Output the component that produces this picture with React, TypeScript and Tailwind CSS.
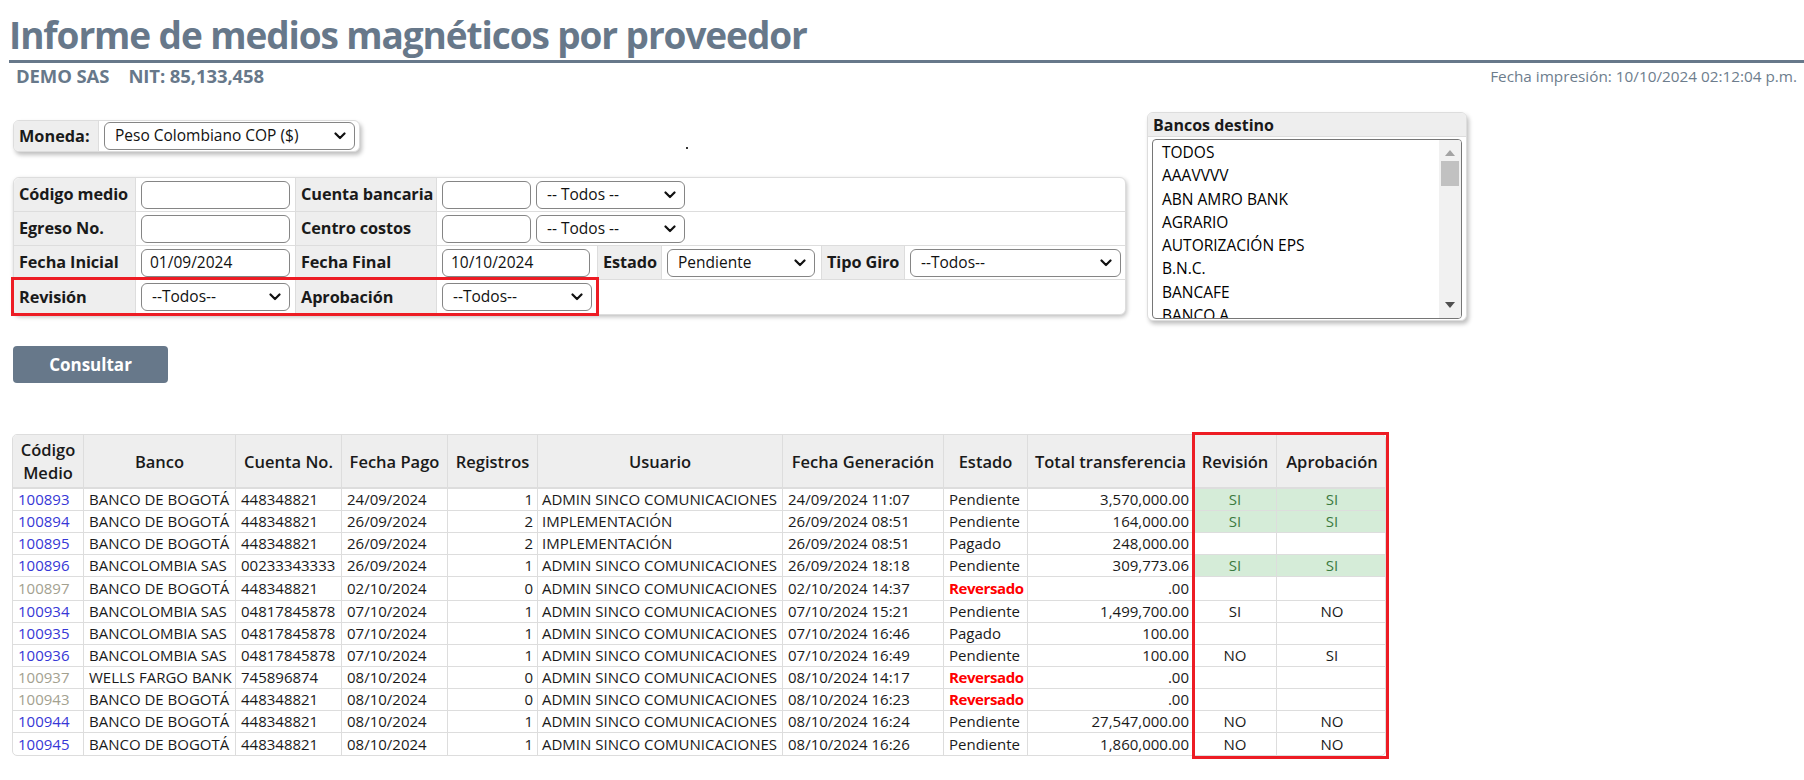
import React from "react";

const F = { fontFamily: '"Open Sans", "Noto Sans", Arial, sans-serif' };

function Chevron() {
  return (
    <svg width="12" height="8" viewBox="0 0 12 8" className="shrink-0">
      <path d="M1.5 1.5 L6 6 L10.5 1.5" fill="none" stroke="#111" strokeWidth="2.2" strokeLinecap="round" strokeLinejoin="round" />
    </svg>
  );
}

function Sel({ w, text }: { w: string; text: string }) {
  return (
    <div className={`${w} h-[28px] flex items-center justify-between border border-[#858585] rounded-[6px] bg-white pl-[10px] pr-[8px] text-[15.5px] text-[#111]`}>
      <span className="whitespace-nowrap">{text}</span>
      <Chevron />
    </div>
  );
}

function Inp({ w, text = "" }: { w: string; text?: string }) {
  return (
    <div className={`${w} h-[28px] flex items-center border border-[#858585] rounded-[6px] bg-white px-[8px] text-[15.5px] text-[#111]`}>
      {text}
    </div>
  );
}

function Label({ w, children }: { w: string; children: React.ReactNode }) {
  return (
    <div className={`${w} h-full bg-[#eeeeee] border-r border-[#dddddd] flex items-center pl-[5px] text-[16.3px] font-bold text-[#1a1a1a] whitespace-nowrap tracking-[-0.1px]`}>
      {children}
    </div>
  );
}

const banks = ["TODOS", "AAAVVVV", "ABN AMRO BANK", "AGRARIO", "AUTORIZACIÓN EPS", "B.N.C.", "BANCAFE", "BANCO A"];

type Row = {
  code: string;
  gray?: boolean;
  banco: string;
  cuenta: string;
  fecha: string;
  reg: string;
  usuario: string;
  gen: string;
  estado: string;
  total: string;
  rev: string;
  apr: string;
  green?: boolean;
  tall?: boolean;
};

const rows: Row[] = [
  { code: "100893", banco: "BANCO DE BOGOTÁ", cuenta: "448348821", fecha: "24/09/2024", reg: "1", usuario: "ADMIN SINCO COMUNICACIONES", gen: "24/09/2024 11:07", estado: "Pendiente", total: "3,570,000.00", rev: "SI", apr: "SI", green: true },
  { code: "100894", banco: "BANCO DE BOGOTÁ", cuenta: "448348821", fecha: "26/09/2024", reg: "2", usuario: "IMPLEMENTACIÓN", gen: "26/09/2024 08:51", estado: "Pendiente", total: "164,000.00", rev: "SI", apr: "SI", green: true },
  { code: "100895", banco: "BANCO DE BOGOTÁ", cuenta: "448348821", fecha: "26/09/2024", reg: "2", usuario: "IMPLEMENTACIÓN", gen: "26/09/2024 08:51", estado: "Pagado", total: "248,000.00", rev: "", apr: "" },
  { code: "100896", banco: "BANCOLOMBIA SAS", cuenta: "00233343333", fecha: "26/09/2024", reg: "1", usuario: "ADMIN SINCO COMUNICACIONES", gen: "26/09/2024 18:18", estado: "Pendiente", total: "309,773.06", rev: "SI", apr: "SI", green: true },
  { code: "100897", gray: true, banco: "BANCO DE BOGOTÁ", cuenta: "448348821", fecha: "02/10/2024", reg: "0", usuario: "ADMIN SINCO COMUNICACIONES", gen: "02/10/2024 14:37", estado: "Reversado", total: ".00", rev: "", apr: "", tall: true },
  { code: "100934", banco: "BANCOLOMBIA SAS", cuenta: "04817845878", fecha: "07/10/2024", reg: "1", usuario: "ADMIN SINCO COMUNICACIONES", gen: "07/10/2024 15:21", estado: "Pendiente", total: "1,499,700.00", rev: "SI", apr: "NO" },
  { code: "100935", banco: "BANCOLOMBIA SAS", cuenta: "04817845878", fecha: "07/10/2024", reg: "1", usuario: "ADMIN SINCO COMUNICACIONES", gen: "07/10/2024 16:46", estado: "Pagado", total: "100.00", rev: "", apr: "" },
  { code: "100936", banco: "BANCOLOMBIA SAS", cuenta: "04817845878", fecha: "07/10/2024", reg: "1", usuario: "ADMIN SINCO COMUNICACIONES", gen: "07/10/2024 16:49", estado: "Pendiente", total: "100.00", rev: "NO", apr: "SI" },
  { code: "100937", gray: true, banco: "WELLS FARGO BANK", cuenta: "745896874", fecha: "08/10/2024", reg: "0", usuario: "ADMIN SINCO COMUNICACIONES", gen: "08/10/2024 14:17", estado: "Reversado", total: ".00", rev: "", apr: "" },
  { code: "100943", gray: true, banco: "BANCO DE BOGOTÁ", cuenta: "448348821", fecha: "08/10/2024", reg: "0", usuario: "ADMIN SINCO COMUNICACIONES", gen: "08/10/2024 16:23", estado: "Reversado", total: ".00", rev: "", apr: "" },
  { code: "100944", banco: "BANCO DE BOGOTÁ", cuenta: "448348821", fecha: "08/10/2024", reg: "1", usuario: "ADMIN SINCO COMUNICACIONES", gen: "08/10/2024 16:24", estado: "Pendiente", total: "27,547,000.00", rev: "NO", apr: "NO" },
  { code: "100945", banco: "BANCO DE BOGOTÁ", cuenta: "448348821", fecha: "08/10/2024", reg: "1", usuario: "ADMIN SINCO COMUNICACIONES", gen: "08/10/2024 16:26", estado: "Pendiente", total: "1,860,000.00", rev: "NO", apr: "NO" },
];

const headers = ["Código Medio", "Banco", "Cuenta No.", "Fecha Pago", "Registros", "Usuario", "Fecha Generación", "Estado", "Total transferencia", "Revisión", "Aprobación"];

const gridCols = "grid grid-cols-[71px_152px_106px_106px_90px_245px_161px_84px_166px_83px_110px]";

export default function App() {
  return (
    <div className="relative w-[1804px] h-[780px] bg-white overflow-hidden text-[#1a1a1a]" style={F}>
      {/* Title */}
      <h1 className="pl-[9px] pt-[12px] text-[37px] font-bold leading-[46px] tracking-[-1.1px] text-[#67788a] whitespace-nowrap">
        Informe de medios magnéticos por proveedor
      </h1>
      <div className="ml-[9px] mt-[2px] h-[3px] bg-[#67788a]" />
      <div className="flex justify-between items-start pl-[16px] pr-[7px] mt-[1px] h-[24px]">
        <div className="flex gap-[19px] text-[18.5px] font-bold text-[#67788a] leading-[24px] tracking-[-0.1px]">
          <span>DEMO SAS</span>
          <span>NIT: 85,133,458</span>
        </div>
        <div className="text-[15.3px] text-[#6d7d8d] leading-[24px]">Fecha impresión: 10/10/2024 02:12:04 p.m.</div>
      </div>

      {/* Top section */}
      <div className="flex pl-[13px] mt-[24px]">
        <div className="w-[1113px] flex flex-col">
          {/* Moneda */}
          <div className="mt-[8px] w-[347px] h-[32px] flex items-center border border-[#dddddd] rounded-[6px] shadow-[2px_3px_4px_rgba(0,0,0,0.25)] bg-white overflow-hidden">
            <div className="w-[85px] h-full bg-[#eeeeee] border-r border-[#dddddd] flex items-center pl-[5px] text-[16.3px] font-bold">Moneda:</div>
            <div className="pl-[5px]">
              <Sel w="w-[251px]" text="Peso Colombiano COP ($)" />
            </div>
          </div>

          {/* Filters */}
          <div className="relative mt-[25px] w-[1113px] border border-[#dddddd] rounded-[6px] shadow-[1px_2px_4px_rgba(0,0,0,0.25)] bg-white">
            <div className="flex h-[34px] border-b border-[#dddddd]">
              <Label w="w-[122px] rounded-tl-[6px]">Código medio</Label>
              <div className="w-[160px] border-r border-[#dddddd] flex items-center pl-[5px]"><Inp w="w-[149px]" /></div>
              <Label w="w-[141px]">Cuenta bancaria</Label>
              <div className="flex-1 flex items-center gap-[5px] pl-[5px]">
                <Inp w="w-[89px]" />
                <Sel w="w-[149px]" text="-- Todos --" />
              </div>
            </div>
            <div className="flex h-[34px] border-b border-[#dddddd]">
              <Label w="w-[122px]">Egreso No.</Label>
              <div className="w-[160px] border-r border-[#dddddd] flex items-center pl-[5px]"><Inp w="w-[149px]" /></div>
              <Label w="w-[141px]">Centro costos</Label>
              <div className="flex-1 flex items-center gap-[5px] pl-[5px]">
                <Inp w="w-[89px]" />
                <Sel w="w-[149px]" text="-- Todos --" />
              </div>
            </div>
            <div className="flex h-[34px] border-b border-[#dddddd]">
              <Label w="w-[122px]">Fecha Inicial</Label>
              <div className="w-[160px] border-r border-[#dddddd] flex items-center pl-[5px]"><Inp w="w-[149px]" text="01/09/2024" /></div>
              <Label w="w-[141px]">Fecha Final</Label>
              <div className="w-[161px] border-r border-[#dddddd] flex items-center pl-[5px]"><Inp w="w-[148px]" text="10/10/2024" /></div>
              <Label w="w-[64px]">Estado</Label>
              <div className="w-[160px] border-r border-[#dddddd] flex items-center pl-[5px]"><Sel w="w-[148px]" text="Pendiente" /></div>
              <Label w="w-[83px]">Tipo Giro</Label>
              <div className="flex-1 flex items-center pl-[5px]"><Sel w="w-[211px]" text="--Todos--" /></div>
            </div>
            <div className="flex h-[34px]">
              <Label w="w-[122px] rounded-bl-[6px]">Revisión</Label>
              <div className="w-[160px] border-r border-[#dddddd] flex items-center pl-[5px]"><Sel w="w-[149px]" text="--Todos--" /></div>
              <Label w="w-[141px]">Aprobación</Label>
              <div className="w-[161px] border-r border-[#dddddd] flex items-center pl-[5px]"><Sel w="w-[150px]" text="--Todos--" /></div>
            </div>
            {/* annotation box */}
            <div className="absolute left-[-3px] top-[99px] w-[588px] h-[39px] border-[3px] border-[#ed1c24]" />
          </div>

          {/* Consultar */}
          <div className="mt-[31px] w-[155px] h-[37px] rounded-[4px] bg-[#67788a] flex items-center justify-center text-white font-bold text-[17px]">
            Consultar
          </div>
        </div>

        {/* Bancos destino */}
        <div className="ml-[21px] w-[320px] h-[209px] border border-[#dddddd] rounded-[6px] shadow-[2px_3px_4px_rgba(0,0,0,0.25)] bg-white flex flex-col overflow-hidden">
          <div className="h-[24px] bg-[#eeeeee] border-b border-[#dddddd] flex items-center pl-[5px] text-[16px] font-bold">Bancos destino</div>
          <div className="mx-[4px] mt-[2px] h-[180px] border border-[#767676] rounded-[4px] flex overflow-hidden">
            <div className="flex-1 pl-[9px] pt-[1px] text-[15.5px] text-black">
              {banks.map((b) => (
                <div key={b} className="h-[23.3px] leading-[23.3px] whitespace-nowrap">{b}</div>
              ))}
            </div>
            <div className="w-[22px] bg-[#f1f1f1] flex flex-col items-center">
              <svg width="10" height="6" viewBox="0 0 10 6" className="mt-[10px]"><path d="M0 6 L5 0 L10 6 Z" fill="#a3a3a3" /></svg>
              <div className="mt-[5px] w-[18px] h-[25px] bg-[#c1c1c1]" />
              <div className="flex-1" />
              <svg width="10" height="6" viewBox="0 0 10 6" className="mb-[10px]"><path d="M0 0 L5 6 L10 0 Z" fill="#505050" /></svg>
            </div>
          </div>
        </div>
      </div>

      {/* stray dot */}
      <div className="absolute left-[686px] top-[147px] w-[2px] h-[2px] bg-[#333]" />

      {/* Main table */}
      <div className="ml-[12px] mt-[51px] w-[1374px] border border-[#dddddd] rounded-[5px] overflow-hidden relative">
        <div className={`${gridCols} h-[54px] bg-[#eeeeee] border-b-[2px] border-[#dddddd]`}>
          {headers.map((h, i) => (
            <div key={h} className={`flex items-center justify-center text-center text-[16.5px] font-semibold leading-[23px] text-[#1a1a1a] px-[2px] whitespace-nowrap ${i < 10 ? "border-r border-[#dddddd]" : ""}`}>
              {i === 0 ? (<span>Código<br />Medio</span>) : h}
            </div>
          ))}
        </div>
        {rows.map((r, idx) => {
          const last = idx === rows.length - 1;
          const rowCls = `${gridCols} ${r.tall ? "h-[24px]" : "h-[22px]"} ${last ? "" : "border-b border-[#dddddd]"} text-[15px] leading-[21px]`;
          const c = "border-r border-[#dddddd] px-[5px] whitespace-nowrap overflow-hidden flex items-center";
          const g = r.green ? "bg-[#d5ecd8] text-[#3b7a40]" : "text-[#1a1a1a]";
          return (
            <div key={r.code} className={rowCls}>
              <div className={`${c} ${r.gray ? "text-[#a3a190]" : "text-[#3737d6]"}`}>{r.code}</div>
              <div className={c}>{r.banco}</div>
              <div className={c}>{r.cuenta}</div>
              <div className={c}>{r.fecha}</div>
              <div className={`${c} justify-end pr-[4px]`}>{r.reg}</div>
              <div className={`${c} pl-[4px]`}>{r.usuario}</div>
              <div className={c}>{r.gen}</div>
              <div className={`${c} ${r.estado === "Reversado" ? "text-[#ff0000] font-bold tracking-[-0.4px]" : ""}`}>{r.estado}</div>
              <div className={`${c} justify-end pr-[4px]`}>{r.total}</div>
              <div className={`${c} justify-center ${g}`}>{r.rev}</div>
              <div className={`px-[5px] flex items-center justify-center ${g}`}>{r.apr}</div>
            </div>
          );
        })}
      </div>
      {/* annotation box for table */}
      <div className="absolute left-[1192px] top-[432px] w-[197px] h-[327px] border-[3px] border-[#ed1c24]" />
    </div>
  );
}
